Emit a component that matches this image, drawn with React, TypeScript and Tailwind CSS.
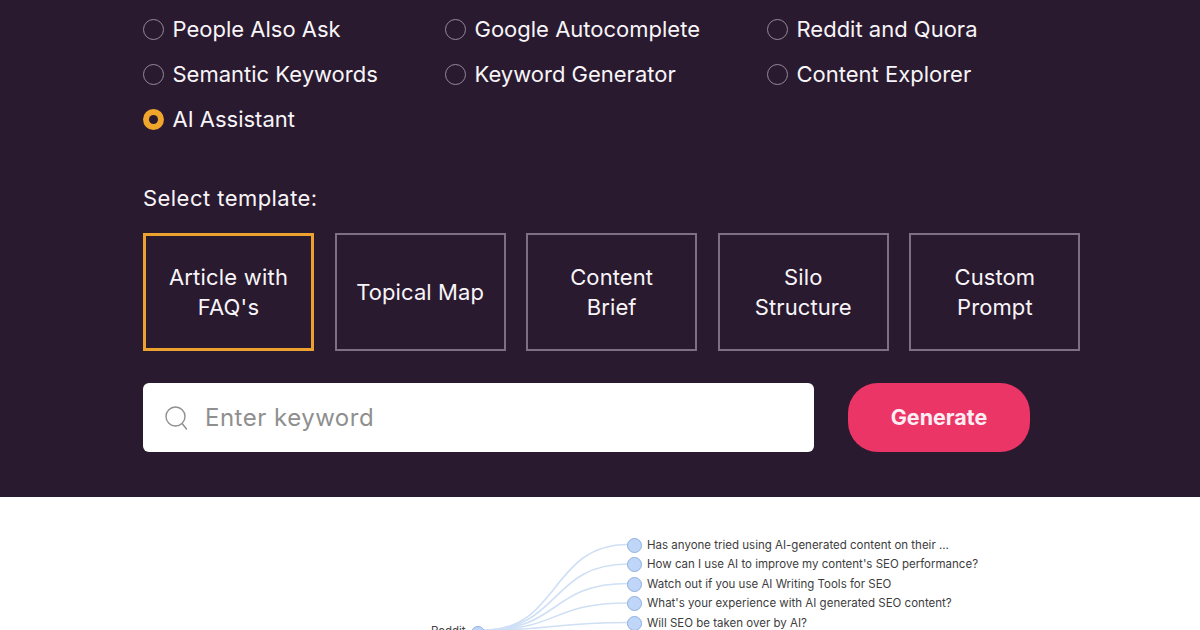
const sources = [
  { label: "People Also Ask" },
  { label: "Google Autocomplete" },
  { label: "Reddit and Quora" },
  { label: "Semantic Keywords" },
  { label: "Keyword Generator" },
  { label: "Content Explorer" },
  { label: "AI Assistant", active: true },
];

const templates = [
  { label: ["Article with", "FAQ's"], active: true },
  { label: ["Topical Map"] },
  { label: ["Content", "Brief"] },
  { label: ["Silo", "Structure"] },
  { label: ["Custom", "Prompt"] },
];

const questions = [
  "Has anyone tried using AI-generated content on their ...",
  "How can I use AI to improve my content's SEO performance?",
  "Watch out if you use AI Writing Tools for SEO",
  "What's your experience with AI generated SEO content?",
  "Will SEO be taken over by AI?",
];

const font = { fontFamily: "Inter, 'Noto Sans', sans-serif" };

export default function App() {
  return (
    <div className="w-[1200px] h-[630px] overflow-hidden bg-white" style={font}>
      {/* Dark form panel */}
      <div className="h-[497px] bg-[#2a1a30] pl-[143px] pt-[6.5px] text-[#f8f5f8]">
        <div className="grid grid-cols-[302px_322px_1fr]">
          {sources.map((s) => (
            <div key={s.label} className="flex h-[45px] items-center gap-[8.5px] text-[22px]">
              {s.active ? (
                <span className="flex h-[21px] w-[21px] items-center justify-center rounded-full bg-[#f0a52c]">
                  <span className="h-[9px] w-[9px] rounded-full bg-[#2a1a30]" />
                </span>
              ) : (
                <span className="h-[21px] w-[21px] rounded-full border border-[#958a9a]" />
              )}
              {s.label}
            </div>
          ))}
        </div>

        <div className="mt-[41.5px] flex h-[30px] items-center text-[22px] tracking-[0.45px]">Select template:</div>

        <div className="mt-[20px] flex gap-[20.6px]">
          {templates.map((t) => (
            <div
              key={t.label[0]}
              className={
                t.active
                  ? "flex h-[118px] w-[171px] flex-col items-center justify-center border-[3px] border-[#eda12f] text-[22px] leading-[30px] tracking-[0.2px]"
                  : "flex h-[118px] w-[171px] flex-col items-center justify-center border-2 border-[#7d7083] text-[22px] leading-[30px] tracking-[0.1px]"
              }
            >
              {t.label.map((line) => (
                <span key={line}>{line}</span>
              ))}
            </div>
          ))}
        </div>

        <div className="mt-[32px] flex items-center gap-[34px]">
          <div className="flex h-[69px] w-[671px] items-center gap-[17px] rounded-md bg-white pl-[22px] text-[24px] tracking-[0.5px] text-[#8f8f8f]">
            <svg width="23" height="24" viewBox="0 0 23 24" fill="none" stroke="#8f8f8f" strokeWidth="1.4" strokeLinecap="round">
              <circle cx="10.5" cy="10.5" r="9.5" />
              <path d="M17.5 18l4 5" />
            </svg>
            Enter keyword
          </div>
          <div className="flex h-[69px] w-[182px] items-center justify-center rounded-[30px] bg-[#ec3567] text-[21.5px] font-bold text-[#fdeef3]">
            Generate
          </div>
        </div>
      </div>

      {/* Mind map preview */}
      <div className="relative h-[133px]">
        <svg className="absolute inset-0" width="1200" height="133" fill="none" stroke="#cfdff5" strokeWidth="1.6">
          <path d="M484 133C560 133 550 47.5 628 47.5" />
          <path d="M484 133C560 133 550 67 628 67" />
          <path d="M484 133C560 133 550 86.5 628 86.5" />
          <path d="M484 133C560 133 550 106 628 106" />
          <path d="M484 133C560 133 550 125.5 628 125.5" />
        </svg>
        <span className="absolute left-[431px] top-[126px] text-[11.5px] text-[#444]">Reddit</span>
        <span className="absolute left-[471px] top-[129px] h-[14px] w-[14px] rounded-full border border-[#8fb0dc] bg-[#bfd6f8]" />
        <div className="absolute left-[627px] top-[38px] flex flex-col">
          {questions.map((q) => (
            <div key={q} className="flex h-[19.5px] items-center gap-[5px] whitespace-nowrap pt-px text-[11.5px] text-[#3d3d3d]">
              <span className="h-[15px] w-[15px] shrink-0 rounded-full border border-[#8fb0dc] bg-[#bfd6f8]" />
              {q}
            </div>
          ))}
        </div>
      </div>
    </div>
  );
}
